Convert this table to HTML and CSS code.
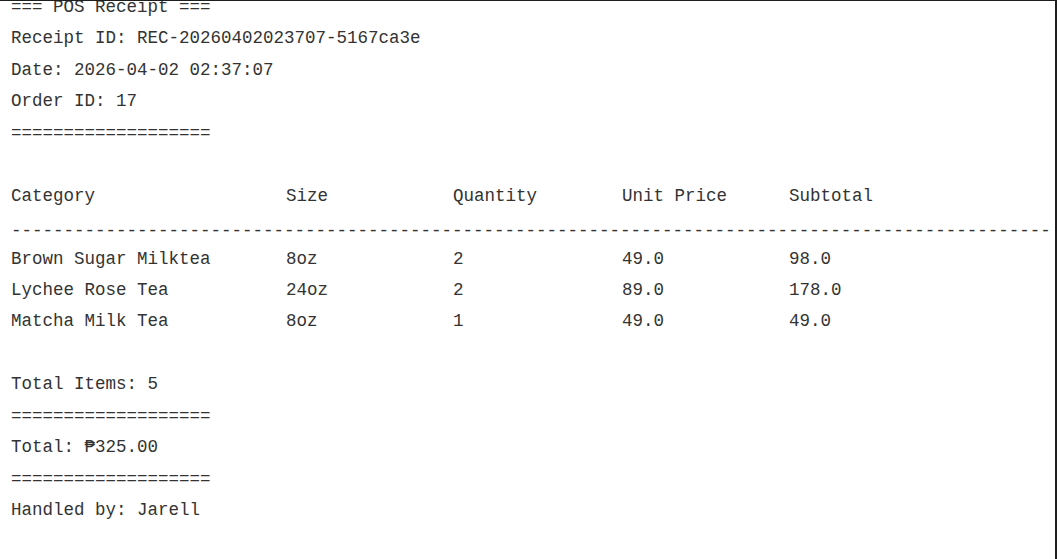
FILE: index.html
```html
<!doctype html>
<html>
<head>
  <title>POS Receipt</title>
  <link rel="stylesheet" href="styles.css">
</head>
<body>
  <div class="receipt">
    <div class="content">
      <p class="line">=== POS Receipt ===</p>
      <p class="line">Receipt ID: REC-20260402023707-5167ca3e</p>
      <p class="line">Date: 2026-04-02 02:37:07</p>
      <p class="line">Order ID: 17</p>
      <p class="line">===================</p>
      <p class="line"></p>
      <div class="line row">
        <span>Category</span><span>Size</span><span>Quantity</span><span>Unit Price</span><span>Subtotal</span>
      </div>
      <p class="line rule">----------------------------------------------------------------------------------------------------</p>
      <div class="line row">
        <span>Brown Sugar Milktea</span><span>8oz</span><span>2</span><span>49.0</span><span>98.0</span>
      </div>
      <div class="line row">
        <span>Lychee Rose Tea</span><span>24oz</span><span>2</span><span>89.0</span><span>178.0</span>
      </div>
      <div class="line row">
        <span>Matcha Milk Tea</span><span>8oz</span><span>1</span><span>49.0</span><span>49.0</span>
      </div>
      <p class="line"></p>
      <p class="line">Total Items: 5</p>
      <p class="line">===================</p>
      <p class="line">Total: &#8369;325.00</p>
      <p class="line">===================</p>
      <p class="line">Handled by: Jarell</p>
    </div>
  </div>
</body>
</html>
```

FILE: styles.css
```css
html, body { margin: 0; background: #fff; }
.receipt {
  box-sizing: border-box;
  width: 1057px;
  height: 559px;
  overflow: hidden;
  border-top: 1px solid #1e1e1e;
  border-right: 2px solid #1e1e1e;
  padding: 0 5px 0 11px;
}
.content {
  margin-top: -9px;
  font-family: "Liberation Mono", "DejaVu Sans Mono", monospace;
  font-size: 17.5px;
  color: #333;
}
.line {
  margin: 0;
  height: 31.45px;
  line-height: 31.45px;
  white-space: pre;
  overflow: hidden;
}
.rule {
  padding-top: 4px;
  box-sizing: border-box;
}
.row {
  display: grid;
  grid-template-columns: 275px 167px 169px 167px 1fr;
}
```
